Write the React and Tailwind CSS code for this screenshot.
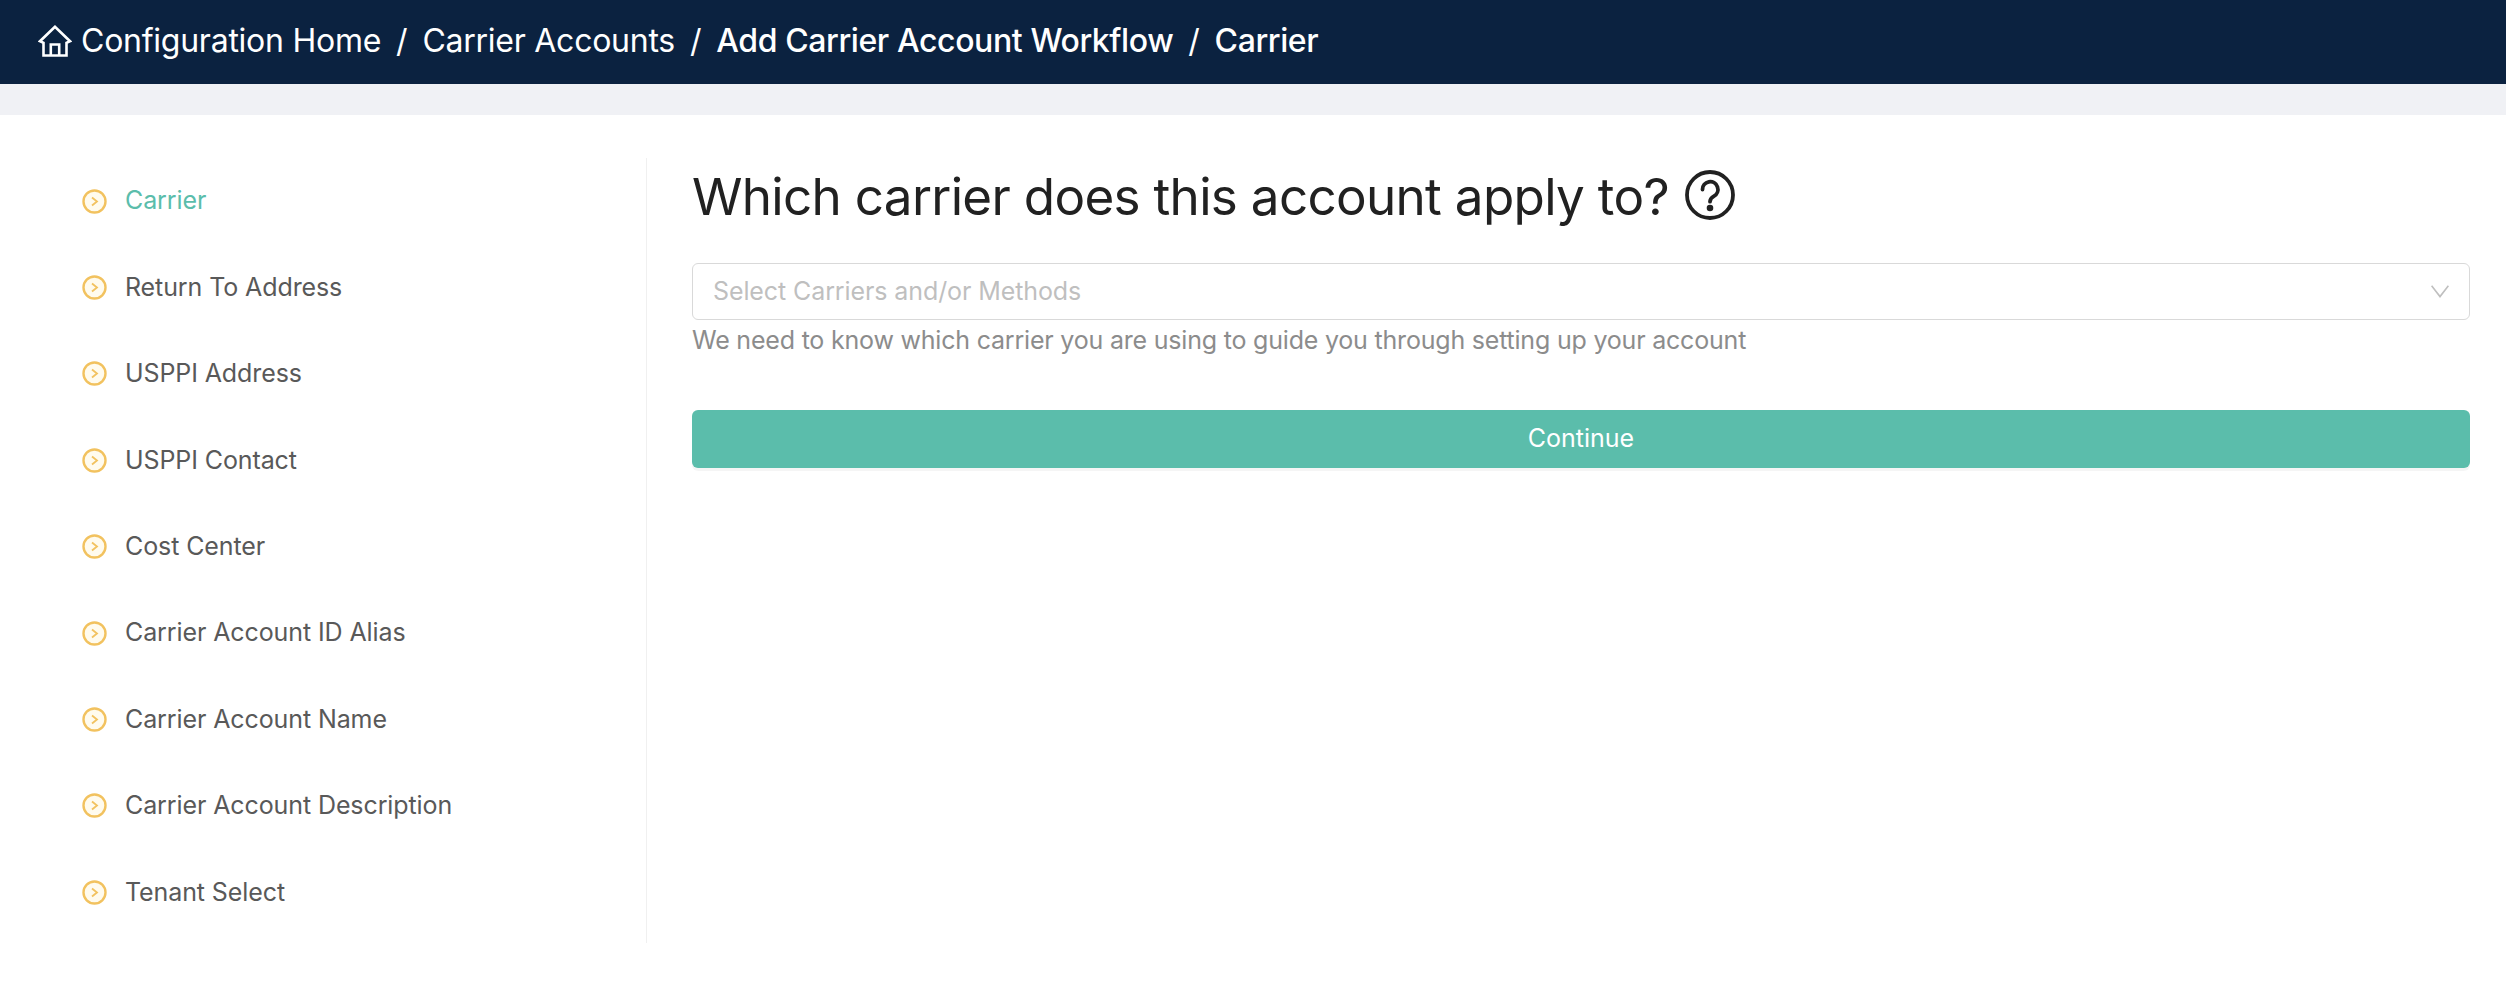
import React from 'react';

const STEPS = [
  'Carrier',
  'Return To Address',
  'USPPI Address',
  'USPPI Contact',
  'Cost Center',
  'Carrier Account ID Alias',
  'Carrier Account Name',
  'Carrier Account Description',
  'Tenant Select',
];

const HomeIcon = () => (
  <svg width="34" height="32" viewBox="0 0 34 32" fill="none" stroke="white" strokeWidth="2.6" strokeLinejoin="miter" className="shrink-0">
    <path d="M17 1.8 2 16.2l3.5 1.6V30.5h23V17.8l3.5-1.6z" />
    <path d="M12.8 30.5V19.5h8.4v11" />
  </svg>
);

const StepIcon = () => (
  <svg width="25" height="25" viewBox="0 0 25 25" fill="#fffbee" className="shrink-0">
    <circle cx="12.5" cy="12.5" r="11" stroke="#f2c25f" strokeWidth="2.4" />
    <path d="M10 8.5l5 4-5 4" fill="none" stroke="#f2c25f" strokeWidth="1.8" />
  </svg>
);

const HelpIcon = () => (
  <svg width="50" height="50" viewBox="0 0 50 50" fill="none" stroke="#212121" strokeWidth="3.8" className="shrink-0">
    <circle cx="25" cy="25" r="23" />
    <path d="M17.5 19.5a7.7 7.7 0 1 1 11.5 6.6c-2.8 1.6-4 2.8-4 5.6" strokeLinecap="round" />
    <circle cx="25" cy="38" r="1.4" fill="#212121" />
  </svg>
);

const SelectChevron = () => (
  <svg width="18" height="13" viewBox="0 0 18 13" fill="none" stroke="#bfbfbf" strokeWidth="1.6" className="shrink-0">
    <path d="M0.6 0.8 9 11.6 17.4 0.8" />
  </svg>
);

const App = () => (
  <div className="h-[982px] overflow-hidden bg-white font-['Inter',sans-serif]">
    <header className="flex h-[84px] items-center gap-[9px] bg-[#0b2240] pb-[2px] pl-[38px] text-[32px] tracking-[-0.25px] text-white">
      <HomeIcon />
      <span>Configuration Home</span>
      <span className="mx-[6px]">/</span>
      <span>Carrier Accounts</span>
      <span className="mx-[6px]">/</span>
      <span className="font-medium tracking-[-0.4px]">Add Carrier Account Workflow</span>
      <span className="mx-[6px]">/</span>
      <span className="font-medium tracking-[-0.4px]">Carrier</span>
    </header>
    <div className="h-[31px] bg-[#f0f1f5]" />
    <div className="flex pt-[43px]">
      <aside className="h-[785px] w-[647px] shrink-0 border-r border-[#f0f0f0] pl-[82px]">
        <ul>
          {STEPS.map((step, i) => (
            <li key={step} className="flex h-[86.4px] items-center gap-[18px] text-[25px] tracking-[-0.1px]">
              <StepIcon />
              <span className={i === 0 ? 'text-[#5bbdab]' : 'text-[#595959]'}>{step}</span>
            </li>
          ))}
        </ul>
      </aside>
      <main className="flex-1 pl-[45px] pr-[36px]">
        <h1 className="flex h-[74px] items-center gap-[16px] text-[51.2px] font-normal tracking-[-0.7px] text-[#212121]">
          <span className="mt-[2px]">Which carrier does this account apply to?</span>
          <HelpIcon />
        </h1>
        <div className="mt-[31px] flex h-[57px] items-center justify-between rounded-[6px] border border-[#d9d9d9] bg-white pl-[20px] pr-[20px] text-[25px] tracking-[-0.1px] text-[#bfbfbf]">
          <span>Select Carriers and/or Methods</span>
          <SelectChevron />
        </div>
        <p className="mt-[2px] text-[25px] tracking-[-0.2px] text-[#8c8c8c]">
          We need to know which carrier you are using to guide you through setting up your account
        </p>
        <button className="mt-[50px] flex h-[58px] w-full items-center justify-center rounded-[6px] bg-[#5bbdab] text-[25px] text-white shadow-[0_3px_0_rgba(0,0,0,0.04)]">
          Continue
        </button>
      </main>
    </div>
  </div>
);

export default App;
